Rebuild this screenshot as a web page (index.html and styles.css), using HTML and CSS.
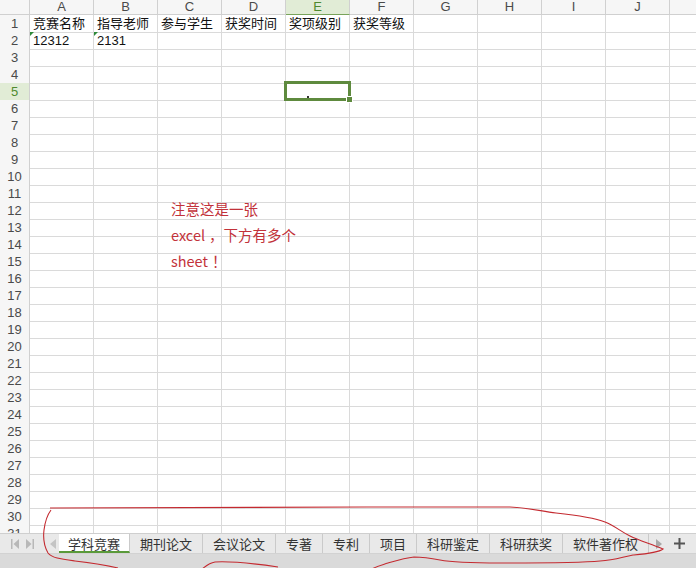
FILE: index.html
```html
<!DOCTYPE html>
<html lang="zh-CN">
<head>
<meta charset="utf-8">
<title>学科竞赛</title>
<link rel="stylesheet" href="styles.css">
</head>
<body>
<div class="app">
  <div class="sheet">
    <div class="row head"><div class="corner"></div><div class="ch">A</div><div class="ch">B</div><div class="ch">C</div><div class="ch">D</div><div class="ch sel">E</div><div class="ch">F</div><div class="ch">G</div><div class="ch">H</div><div class="ch">I</div><div class="ch">J</div><div class="ch"></div></div>
    <div class="row"><div class="rh">1</div><div class="c">竞赛名称</div><div class="c">指导老师</div><div class="c">参与学生</div><div class="c">获奖时间</div><div class="c">奖项级别</div><div class="c">获奖等级</div><div class="c"></div><div class="c"></div><div class="c"></div><div class="c"></div><div class="c"></div></div>
    <div class="row"><div class="rh">2</div><div class="c txt">12312</div><div class="c txt">2131</div><div class="c"></div><div class="c"></div><div class="c"></div><div class="c"></div><div class="c"></div><div class="c"></div><div class="c"></div><div class="c"></div><div class="c"></div></div>
    <div class="row"><div class="rh">3</div><div class="c"></div><div class="c"></div><div class="c"></div><div class="c"></div><div class="c"></div><div class="c"></div><div class="c"></div><div class="c"></div><div class="c"></div><div class="c"></div><div class="c"></div></div>
    <div class="row"><div class="rh">4</div><div class="c"></div><div class="c"></div><div class="c"></div><div class="c"></div><div class="c"></div><div class="c"></div><div class="c"></div><div class="c"></div><div class="c"></div><div class="c"></div><div class="c"></div></div>
    <div class="row"><div class="rh sel">5</div><div class="c"></div><div class="c"></div><div class="c"></div><div class="c"></div><div class="c"></div><div class="c"></div><div class="c"></div><div class="c"></div><div class="c"></div><div class="c"></div><div class="c"></div></div>
    <div class="row"><div class="rh">6</div><div class="c"></div><div class="c"></div><div class="c"></div><div class="c"></div><div class="c"></div><div class="c"></div><div class="c"></div><div class="c"></div><div class="c"></div><div class="c"></div><div class="c"></div></div>
    <div class="row"><div class="rh">7</div><div class="c"></div><div class="c"></div><div class="c"></div><div class="c"></div><div class="c"></div><div class="c"></div><div class="c"></div><div class="c"></div><div class="c"></div><div class="c"></div><div class="c"></div></div>
    <div class="row"><div class="rh">8</div><div class="c"></div><div class="c"></div><div class="c"></div><div class="c"></div><div class="c"></div><div class="c"></div><div class="c"></div><div class="c"></div><div class="c"></div><div class="c"></div><div class="c"></div></div>
    <div class="row"><div class="rh">9</div><div class="c"></div><div class="c"></div><div class="c"></div><div class="c"></div><div class="c"></div><div class="c"></div><div class="c"></div><div class="c"></div><div class="c"></div><div class="c"></div><div class="c"></div></div>
    <div class="row"><div class="rh">10</div><div class="c"></div><div class="c"></div><div class="c"></div><div class="c"></div><div class="c"></div><div class="c"></div><div class="c"></div><div class="c"></div><div class="c"></div><div class="c"></div><div class="c"></div></div>
    <div class="row"><div class="rh">11</div><div class="c"></div><div class="c"></div><div class="c"></div><div class="c"></div><div class="c"></div><div class="c"></div><div class="c"></div><div class="c"></div><div class="c"></div><div class="c"></div><div class="c"></div></div>
    <div class="row"><div class="rh">12</div><div class="c"></div><div class="c"></div><div class="c"></div><div class="c"></div><div class="c"></div><div class="c"></div><div class="c"></div><div class="c"></div><div class="c"></div><div class="c"></div><div class="c"></div></div>
    <div class="row"><div class="rh">13</div><div class="c"></div><div class="c"></div><div class="c"></div><div class="c"></div><div class="c"></div><div class="c"></div><div class="c"></div><div class="c"></div><div class="c"></div><div class="c"></div><div class="c"></div></div>
    <div class="row"><div class="rh">14</div><div class="c"></div><div class="c"></div><div class="c"></div><div class="c"></div><div class="c"></div><div class="c"></div><div class="c"></div><div class="c"></div><div class="c"></div><div class="c"></div><div class="c"></div></div>
    <div class="row"><div class="rh">15</div><div class="c"></div><div class="c"></div><div class="c"></div><div class="c"></div><div class="c"></div><div class="c"></div><div class="c"></div><div class="c"></div><div class="c"></div><div class="c"></div><div class="c"></div></div>
    <div class="row"><div class="rh">16</div><div class="c"></div><div class="c"></div><div class="c"></div><div class="c"></div><div class="c"></div><div class="c"></div><div class="c"></div><div class="c"></div><div class="c"></div><div class="c"></div><div class="c"></div></div>
    <div class="row"><div class="rh">17</div><div class="c"></div><div class="c"></div><div class="c"></div><div class="c"></div><div class="c"></div><div class="c"></div><div class="c"></div><div class="c"></div><div class="c"></div><div class="c"></div><div class="c"></div></div>
    <div class="row"><div class="rh">18</div><div class="c"></div><div class="c"></div><div class="c"></div><div class="c"></div><div class="c"></div><div class="c"></div><div class="c"></div><div class="c"></div><div class="c"></div><div class="c"></div><div class="c"></div></div>
    <div class="row"><div class="rh">19</div><div class="c"></div><div class="c"></div><div class="c"></div><div class="c"></div><div class="c"></div><div class="c"></div><div class="c"></div><div class="c"></div><div class="c"></div><div class="c"></div><div class="c"></div></div>
    <div class="row"><div class="rh">20</div><div class="c"></div><div class="c"></div><div class="c"></div><div class="c"></div><div class="c"></div><div class="c"></div><div class="c"></div><div class="c"></div><div class="c"></div><div class="c"></div><div class="c"></div></div>
    <div class="row"><div class="rh">21</div><div class="c"></div><div class="c"></div><div class="c"></div><div class="c"></div><div class="c"></div><div class="c"></div><div class="c"></div><div class="c"></div><div class="c"></div><div class="c"></div><div class="c"></div></div>
    <div class="row"><div class="rh">22</div><div class="c"></div><div class="c"></div><div class="c"></div><div class="c"></div><div class="c"></div><div class="c"></div><div class="c"></div><div class="c"></div><div class="c"></div><div class="c"></div><div class="c"></div></div>
    <div class="row"><div class="rh">23</div><div class="c"></div><div class="c"></div><div class="c"></div><div class="c"></div><div class="c"></div><div class="c"></div><div class="c"></div><div class="c"></div><div class="c"></div><div class="c"></div><div class="c"></div></div>
    <div class="row"><div class="rh">24</div><div class="c"></div><div class="c"></div><div class="c"></div><div class="c"></div><div class="c"></div><div class="c"></div><div class="c"></div><div class="c"></div><div class="c"></div><div class="c"></div><div class="c"></div></div>
    <div class="row"><div class="rh">25</div><div class="c"></div><div class="c"></div><div class="c"></div><div class="c"></div><div class="c"></div><div class="c"></div><div class="c"></div><div class="c"></div><div class="c"></div><div class="c"></div><div class="c"></div></div>
    <div class="row"><div class="rh">26</div><div class="c"></div><div class="c"></div><div class="c"></div><div class="c"></div><div class="c"></div><div class="c"></div><div class="c"></div><div class="c"></div><div class="c"></div><div class="c"></div><div class="c"></div></div>
    <div class="row"><div class="rh">27</div><div class="c"></div><div class="c"></div><div class="c"></div><div class="c"></div><div class="c"></div><div class="c"></div><div class="c"></div><div class="c"></div><div class="c"></div><div class="c"></div><div class="c"></div></div>
    <div class="row"><div class="rh">28</div><div class="c"></div><div class="c"></div><div class="c"></div><div class="c"></div><div class="c"></div><div class="c"></div><div class="c"></div><div class="c"></div><div class="c"></div><div class="c"></div><div class="c"></div></div>
    <div class="row"><div class="rh">29</div><div class="c"></div><div class="c"></div><div class="c"></div><div class="c"></div><div class="c"></div><div class="c"></div><div class="c"></div><div class="c"></div><div class="c"></div><div class="c"></div><div class="c"></div></div>
    <div class="row"><div class="rh">30</div><div class="c"></div><div class="c"></div><div class="c"></div><div class="c"></div><div class="c"></div><div class="c"></div><div class="c"></div><div class="c"></div><div class="c"></div><div class="c"></div><div class="c"></div></div>
    <div class="row"><div class="rh">31</div><div class="c"></div><div class="c"></div><div class="c"></div><div class="c"></div><div class="c"></div><div class="c"></div><div class="c"></div><div class="c"></div><div class="c"></div><div class="c"></div><div class="c"></div></div>

    <div class="selection"><span class="handle"></span><span class="dot"></span></div>
    <div class="note">注意这是一张<br>excel<span class="punct">，</span>下方有多个<br>sheet<span class="punct">！</span></div>
  </div>

  <div class="tabbar">
    <div class="nav">
      <svg class="navicon" width="8" height="10" viewBox="0 0 8 10"><rect x="0" y="0" width="1.5" height="10" fill="#b8b8b8"/><path d="M8 0 L2.5 5 L8 10 Z" fill="#b8b8b8"/></svg>
      <svg class="navicon" width="8" height="10" viewBox="0 0 8 10"><path d="M0 0 L5.5 5 L0 10 Z" fill="#b8b8b8"/><rect x="6.5" y="0" width="1.5" height="10" fill="#b8b8b8"/></svg>
      <svg class="navicon prev" width="6" height="10" viewBox="0 0 6 10"><path d="M6 0 L0 5 L6 10 Z" fill="#c4c4c4"/></svg>
    </div>
    <div class="tab active">学科竞赛</div>
    <div class="tab">期刊论文</div>
    <div class="tab">会议论文</div>
    <div class="tab">专著</div>
    <div class="tab">专利</div>
    <div class="tab">项目</div>
    <div class="tab">科研鉴定</div>
    <div class="tab">科研获奖</div>
    <div class="tab">软件著作权</div>
    <div class="more">
      <svg width="6" height="10" viewBox="0 0 6 10"><path d="M0 0 L6 5 L0 10 Z" fill="#a8a8a8"/></svg>
      <svg class="plus" width="11" height="11" viewBox="0 0 11 11"><rect x="4.5" y="0" width="2" height="11" fill="#555"/><rect x="0" y="4.5" width="11" height="2" fill="#555"/></svg>
    </div>
  </div>
  <div class="status"></div>

  <svg class="scribble" width="696" height="568" viewBox="0 0 696 568">
    <path d="M50 508 C 150 507, 350 507, 510 507 C 530 508, 540 511, 556 513 C 575 515, 595 518, 605 522 C 615 526, 620 531, 630 536 C 640 541, 652 544, 663 549 C 658 553, 645 554, 633 555 C 622 557, 615 560, 600 561 C 580 563, 540 563, 500 563 C 470 563, 450 562, 440 560 C 430 558, 424 557, 414 557 C 405 558, 395 561, 388 563 C 382 565, 377 566, 372 569" fill="none" stroke="#c42a30" stroke-width="1.1"/>
    <path d="M51 510 C 48 514, 45 522, 44 530 C 43 538, 44 546, 48 553 C 52 558, 60 559, 75 561 C 92 563, 105 565, 118 568" fill="none" stroke="#c42a30" stroke-width="1.1"/>
    <path d="M202 569 C 206 566, 209 563, 215 562 C 230 561, 250 563, 278 567" fill="none" stroke="#c42a30" stroke-width="1.1"/>
  </svg>
</div>
</body>
</html>
```

FILE: styles.css
```css
html, body {
  margin: 0;
  padding: 0;
  background: #ffffff;
}

.app {
  position: relative;
  width: 696px;
  height: 568px;
  overflow: hidden;
  font-family: "Liberation Sans", "Noto Sans CJK SC", sans-serif;
  color: #1a1a1a;
}

.sheet {
  position: relative;
  height: 533px;
  overflow: hidden;
  background: #ffffff;
}

.row {
  display: grid;
  grid-template-columns: 30px repeat(11, 64px);
  height: 17px;
}

.row.head {
  height: 15px;
}

.row > div {
  box-sizing: border-box;
  border-right: 1px solid #dadada;
  border-bottom: 1px solid #dadada;
}

.corner,
.ch,
.rh {
  background: #f6f6f6;
  color: #4a4a4a;
  font-size: 13px;
  text-align: center;
}

.row > .corner,
.row > .ch,
.row > .rh {
  border-color: #d0d0d0;
}

.ch {
  line-height: 14px;
}

.rh {
  line-height: 17px;
}

.ch.sel,
.rh.sel {
  background: #e1ecd6;
  color: #4f8a2f;
}

.row > .ch.sel {
  border-bottom-color: #78a35a;
}

.c {
  position: relative;
  padding: 1px 0 0 3px;
  font-size: 13px;
  line-height: 16px;
  white-space: nowrap;
  color: #111111;
}

.c.txt::before {
  content: "";
  position: absolute;
  left: 0;
  top: 0;
  border-top: 4px solid #2f8a3a;
  border-right: 4px solid transparent;
}

.selection {
  position: absolute;
  left: 284px;
  top: 81px;
  width: 67px;
  height: 20px;
  box-sizing: border-box;
  border: 3px solid #5e8a3e;
}

.handle {
  position: absolute;
  right: -5px;
  bottom: -5px;
  width: 5px;
  height: 5px;
  background: #5e8a3e;
  border: 1px solid #ffffff;
}

.dot {
  position: absolute;
  left: 20px;
  bottom: 0;
  width: 2px;
  height: 2px;
  background: #333333;
}

.note {
  position: absolute;
  left: 171px;
  top: 196px;
  font-family: "Noto Sans CJK SC", "Liberation Sans", sans-serif;
  font-size: 14.5px;
  line-height: 26px;
  color: #c2323a;
  white-space: nowrap;
}

.note .punct {
  padding-left: 4px;
}

.tabbar {
  display: flex;
  align-items: stretch;
  height: 20px;
  background: #e9e9e9;
  border-top: 1px solid #cfcfcf;
  box-sizing: border-box;
  font-family: "Noto Sans CJK SC", sans-serif;
  font-size: 13px;
  color: #333333;
}

.nav {
  display: flex;
  align-items: center;
  width: 59px;
  flex: none;
  padding-left: 11px;
  box-sizing: border-box;
  gap: 7px;
}

.nav .prev {
  margin-left: 9px;
}

.tab {
  display: flex;
  align-items: center;
  justify-content: center;
  padding: 0 10px;
  border-right: 1px solid #cacaca;
  line-height: 1;
  white-space: nowrap;
}

.tab.active {
  background: #ffffff;
  border-bottom: 2px solid #5a9a3a;
  padding-top: 2px;
  width: 71px;
  box-sizing: border-box;
}

.more {
  display: flex;
  align-items: center;
  gap: 12px;
  padding-left: 7px;
}

.status {
  height: 15px;
  background: #dadada;
  border-top: 1px solid #d2d2d2;
  box-sizing: border-box;
}

.scribble {
  position: absolute;
  left: 0;
  top: 0;
  pointer-events: none;
}
```
